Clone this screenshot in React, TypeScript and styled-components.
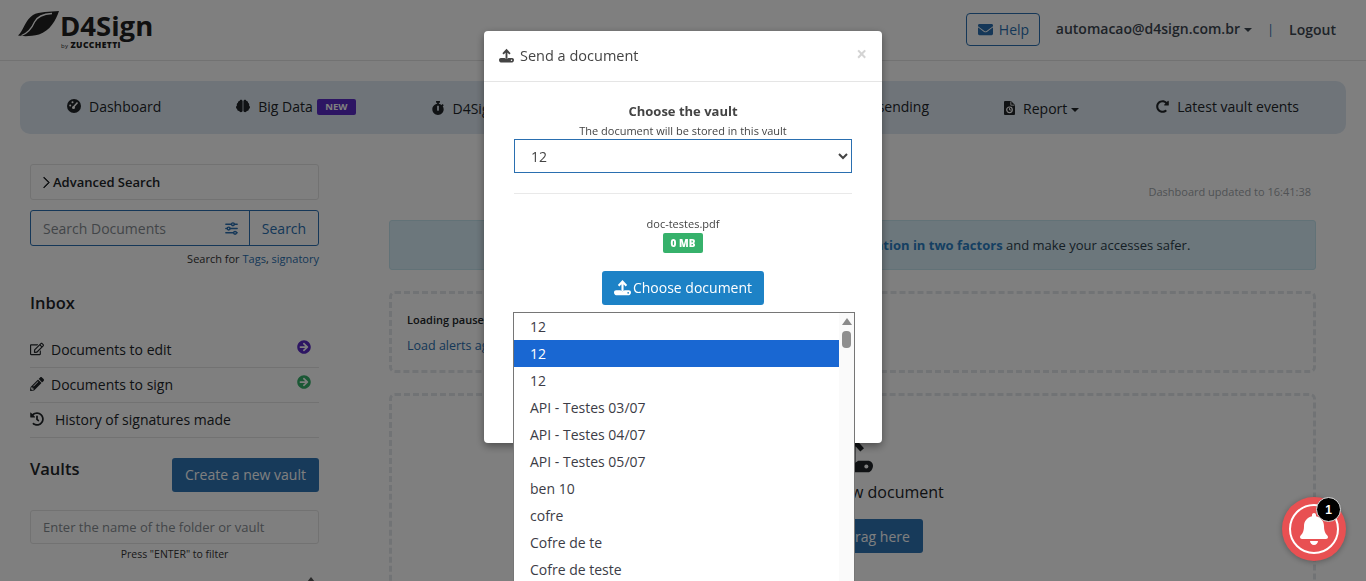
import React from "react";
import styled, { createGlobalStyle } from "styled-components";
import {
  FaEnvelope,
  FaStopwatch,
  FaRedoAlt,
  FaRegEdit,
  FaPencilAlt,
  FaHistory,
  FaArrowCircleRight,
  FaBell,
  FaBrain,
} from "react-icons/fa";
import { BsChevronRight } from "react-icons/bs";
import { TbAdjustmentsHorizontal } from "react-icons/tb";

const GlobalStyle = createGlobalStyle`
  html, body {
    margin: 0;
    height: 100%;
    overflow: hidden;
    background: #fff;
    font-family: "Open Sans", "Liberation Sans", sans-serif;
    color: #212529;
  }
  * { box-sizing: border-box; }
`;

const Page = styled.div`
  width: 1366px;
  height: 581px;
  overflow: hidden;
`;

const Header = styled.header`
  display: flex;
  align-items: center;
  height: 61px;
  padding: 0 30px 2px 18px;
  border-bottom: 1px solid #e4e4e4;
`;

const Logo = styled.div`
  display: flex;
  align-items: flex-start;
  height: 38px;
  margin-top: 2px;
  color: #212121;
`;

const LogoWords = styled.div`
  display: flex;
  flex-direction: column;
  margin-left: 1px;
`;

const LogoName = styled.span`
  font-size: 27.5px;
  font-weight: 700;
  line-height: 29px;
`;

const LogoBy = styled.span`
  font-size: 8.5px;
  font-weight: 800;
  line-height: 9px;
  padding-left: 1px;
  letter-spacing: 0.4px;
  small { font-size: 6px; font-weight: 400; margin-right: 2px; }
`;

const HeaderRight = styled.div`
  display: flex;
  align-items: center;
  margin-left: auto;
  font-size: 14px;
`;

const HelpButton = styled.button`
  display: flex;
  align-items: center;
  gap: 6px;
  height: 33px;
  width: 74px;
  padding: 0 0 0 11px;
  margin-right: 16px;
  background: transparent;
  border: 1px solid #2a6fb0;
  border-radius: 4px;
  color: #2a6fb0;
  font: inherit;
  svg { font-size: 15px; }
`;

const UserMenu = styled.span`
  font-weight: 600;
  color: #3c4650;
  margin-top: -2px;
`;

const Caret = styled.span`
  display: inline-block;
  width: 0;
  height: 0;
  margin-left: 4px;
  vertical-align: 2px;
  border-left: 4px solid transparent;
  border-right: 4px solid transparent;
  border-top: 4px solid currentColor;
`;

const Divider = styled.span`
  margin: 0 15px 0 15px;
  color: #2a6fb0;
  font-size: 13px;
`;

const LogoutLink = styled.span`
  font-weight: 600;
  color: #3c4650;
`;

const Nav = styled.nav`
  display: flex;
  align-items: center;
  gap: 75px;
  height: 53px;
  margin: 20px 20px 0;
  padding: 0 47px 3px;
  background: #dfe9f3;
  border-radius: 10px;
  font-size: 14px;
  color: #212529;
`;

const NavItem = styled.div<{ $low?: boolean; $push?: boolean }>`
  display: flex;
  align-items: center;
  gap: 8px;
  white-space: nowrap;
  margin-top: ${(p) => (p.$low ? "4px" : "0")};
  margin-left: ${(p) => (p.$push ? "auto" : "0")};
  svg { flex-shrink: 0; }
`;

const ReportItem = styled(NavItem)`
  margin-right: 2px;
`;

const NewTag = styled.span`
  display: inline-block;
  background: #5b2bc7;
  color: #fff;
  font-size: 9.5px;
  font-weight: 700;
  line-height: 16px;
  padding: 0 8px 0 8.500px;
  border-radius: 2px;
  margin-left: -4px;
  margin-top: 2px;
`;

const Content = styled.div`
  display: grid;
  grid-template-columns: 289px 927px;
  column-gap: 70px;
  padding: 30px 30px 0;
`;

const Sidebar = styled.aside`
  display: flex;
  flex-direction: column;
`;

const AdvancedBox = styled.div`
  display: flex;
  align-items: center;
  height: 36px;
  padding-left: 9px;
  border: 1px solid #e4e4e4;
  border-radius: 3px;
  font-size: 13px;
  font-weight: 600;
  svg { font-size: 13px; stroke: currentColor; stroke-width: 1px; }
`;

const SearchGroup = styled.div`
  display: flex;
  height: 36px;
  margin-top: 10px;
  border: 1px solid #2a6fb0;
  border-radius: 3px;
  font-size: 14px;
`;

const SearchInput = styled.div`
  display: flex;
  align-items: center;
  flex: 1;
  padding: 0 9px 0 12px;
  color: #858b91;
  svg { margin-left: auto; color: #2a6fb0; font-size: 17px; }
`;

const SearchButton = styled.div`
  display: flex;
  align-items: center;
  justify-content: center;
  width: 69px;
  border-left: 1px solid #2a6fb0;
  color: #2a6fb0;
`;

const SearchHint = styled.div`
  margin-top: 5px;
  text-align: right;
  font-size: 11px;
  line-height: 15px;
  color: #333;
  a { color: #2a6fb0; }
`;

const SectionTitle = styled.h3`
  margin: 0;
  font-size: 16.5px;
  font-weight: 600;
  line-height: 22px;
`;

const InboxTitle = styled(SectionTitle)`
  margin-top: 26px;
  margin-bottom: 19px;
`;

const InboxRow = styled.div<{ $wide?: boolean }>`
  display: flex;
  align-items: center;
  height: 35px;
  padding-bottom: 2px;
  border-bottom: 1px solid #e4e4e4;
  font-size: 14px;
  > svg:first-child { font-size: 14px; margin-right: ${(p) => (p.$wide ? "11px" : "7px")}; }
`;

const RowArrow = styled(FaArrowCircleRight)<{ $tone: string }>`
  margin-left: auto;
  margin-right: 8px;
  margin-top: -4px;
  font-size: 14px;
  color: ${(p) => p.$tone};
`;

const VaultHeader = styled.div`
  display: flex;
  align-items: flex-start;
  justify-content: space-between;
  margin-top: 20px;
`;

const VaultTitle = styled(SectionTitle)`
  margin-top: 0;
`;

const CreateButton = styled.div`
  display: flex;
  align-items: center;
  justify-content: center;
  width: 147px;
  height: 34px;
  padding-bottom: 1px;
  background: #2e74b5;
  color: #fff;
  font-size: 14px;
  border-radius: 3px;
`;

const FilterInput = styled.div`
  display: flex;
  align-items: center;
  height: 34px;
  margin-top: 18px;
  padding-left: 12px;
  border: 1px solid #e4e4e4;
  border-radius: 3px;
  font-size: 13px;
  color: #858b91;
`;

const FilterHint = styled.div`
  margin-top: 3px;
  text-align: center;
  font-size: 10.5px;
  line-height: 14px;
  color: #333;
`;

const Main = styled.main`
  display: flex;
  flex-direction: column;
`;

const UpdatedAt = styled.div`
  margin-top: 20px;
  padding-right: 5px;
  text-align: right;
  font-size: 11px;
  line-height: 16px;
  color: #a0a5aa;
`;

const TwoFactorAlert = styled.div`
  display: flex;
  align-items: center;
  justify-content: center;
  height: 50px;
  margin-top: 20px;
  background: #d9eef8;
  border: 1px solid #c4e4ee;
  border-radius: 3px;
  font-size: 13px;
  color: #2b3e4c;
  b { color: #2a7fc4; font-weight: 700; }
`;

const DashedBox = styled.section`
  border: 3px dashed #e3e6ea;
  border-radius: 6px;
`;

const AlertsBox = styled(DashedBox)`
  height: 82px;
  margin-top: 21px;
  padding: 18px 15px;
  font-size: 11px;
`;

const LoadingLabel = styled.div`
  font-weight: 600;
  line-height: 16px;
`;

const LoadLink = styled.div`
  margin-top: 9px;
  font-size: 12.5px;
  color: #2a6fb0;
`;

const DropBox = styled(DashedBox)`
  display: flex;
  flex-direction: column;
  align-items: center;
  height: 260px;
  margin-top: 20px;
  padding-top: 38px;
  font-size: 16px;
`;

const DropTitle = styled.div`
  margin-top: 6px;
  line-height: 24px;
`;

const DropButton = styled.div`
  display: flex;
  align-items: center;
  justify-content: center;
  width: 141px;
  height: 34px;
  margin-top: 15px;
  background: #2e74b5;
  color: #fff;
  font-size: 14px;
  border-radius: 3px;
`;

const ScrollMark = styled.div`
  align-self: flex-end;
  width: 0;
  height: 0;
  margin-top: 16px;
  margin-right: 4px;
  border-left: 4px solid transparent;
  border-right: 4px solid transparent;
  border-bottom: 5px solid #555;
`;

const Backdrop = styled.div`
  position: fixed;
  inset: 0;
  display: flex;
  justify-content: center;
  align-items: flex-start;
  background: rgba(0, 0, 0, 0.5);
`;

const Modal = styled.div`
  position: relative;
  width: 398px;
  height: 412px;
  margin-top: 31px;
  background: #fff;
  border-radius: 4px;
  box-shadow: 0 3px 9px rgba(0, 0, 0, 0.4);
  color: #444;
`;

const ModalHeader = styled.div`
  display: flex;
  align-items: center;
  gap: 6px;
  height: 51px;
  padding: 0 15px 2px;
  border-bottom: 1px solid #e5e5e5;
  font-size: 14.5px;
  font-weight: 500;
`;

const CloseMark = styled.span`
  margin-left: auto;
  margin-top: -3px;
  font-size: 19px;
  font-weight: 700;
  color: #d4d4d4;
`;

const ModalBody = styled.div`
  display: flex;
  flex-direction: column;
  align-items: center;
  padding: 20px 30px 0;
`;

const VaultLabel = styled.div`
  font-size: 13px;
  font-weight: 700;
  line-height: 18px;
`;

const VaultNote = styled.div`
  font-size: 11px;
  line-height: 16px;
  margin-top: 3px;
`;

const VaultSelect = styled.select`
  width: 338px;
  height: 34px;
  padding: 0 12px;
  background: #fff;
  border: 1px solid #2a6fb0;
  border-radius: 0;
  font: inherit;
  font-size: 14px;
  color: #444;
  outline: none;
`;

const Rule = styled.hr`
  width: 338px;
  margin: 20px 0 0;
  border: 0;
  border-top: 1px solid #e9e9e9;
`;

const FileName = styled.div`
  margin-top: 22px;
  font-size: 11px;
  line-height: 16px;
`;

const SizeBadge = styled.span`
  display: flex;
  align-items: center;
  justify-content: center;
  width: 40px;
  height: 20px;
  margin-top: 1px;
  background: #36b16b;
  color: #fff;
  font-size: 10px;
  font-weight: 800;
  border-radius: 2px;
`;

const ChooseButton = styled.div`
  display: flex;
  align-items: center;
  justify-content: center;
  gap: 2px;
  width: 162px;
  height: 34px;
  margin-top: 18px;
  padding-bottom: 2px;
  background: #1d82c6;
  color: #fff;
  font-size: 14px;
  border-radius: 3px;
`;

const OptionList = styled.div`
  position: absolute;
  top: 281px;
  left: 29px;
  display: flex;
  width: 342px;
  height: 300px;
  background: #fff;
  border: 1px solid #767676;
  color: #3c3c46;
  font-size: 14px;
`;

const Options = styled.div`
  flex: 1;
`;

const OptionRow = styled.div<{ $active?: boolean }>`
  display: flex;
  align-items: center;
  height: 27px;
  padding-left: 16px;
  background: ${(p) => (p.$active ? "#1967d2" : "transparent")};
  color: ${(p) => (p.$active ? "#fff" : "inherit")};
`;

const ScrollTrack = styled.div`
  display: flex;
  flex-direction: column;
  align-items: center;
  width: 15px;
  padding-top: 5px;
  background: #fafafa;
`;

const ScrollUp = styled.span`
  width: 0;
  height: 0;
  border-left: 5px solid transparent;
  border-right: 5px solid transparent;
  border-bottom: 7px solid #8a8a8a;
`;

const ScrollThumb = styled.span`
  width: 9px;
  height: 17px;
  margin-top: 6px;
  background: #8f8f8f;
  border-radius: 4px;
`;

const NotifyButton = styled.div`
  position: fixed;
  left: 1282px;
  top: 497px;
  display: flex;
  align-items: center;
  justify-content: center;
  width: 64px;
  height: 64px;
  background: #e85052;
  border-radius: 50%;
  box-shadow: 0 1px 6px rgba(0, 0, 0, 0.3);
`;

const NotifyRing = styled.div`
  display: flex;
  align-items: center;
  justify-content: center;
  width: 50px;
  height: 50px;
  border: 2px solid #fff;
  border-radius: 50%;
  color: #fff;
  font-size: 32px;
`;

const NotifyCount = styled.span`
  position: absolute;
  top: 0;
  right: 5px;
  display: flex;
  align-items: center;
  justify-content: center;
  width: 25px;
  height: 25px;
  background: #000;
  border: 1px solid #ddd;
  border-radius: 50%;
  color: #fff;
  font-family: "Liberation Sans", sans-serif;
  font-size: 12px;
  font-weight: 700;
`;

const UploadIcon = ({ size = 16, hole = "#fff" }: { size?: number; hole?: string }) => (
  <svg width={size} height={size} viewBox="0 0 24 24" fill="none">
    <path d="M12 17V4M6.500 9.500 12 3.500l5.500 6" stroke="currentColor" strokeWidth="3" />
    <path
      d="M3 16h6c1 1.500 5 1.500 6 0h6c1.700 0 3 1.300 3 3s-1.300 4-3 4H3c-1.700 0-3-2.300-3-4s1.300-3 3-3z"
      fill="currentColor"
    />
    <circle cx="20" cy="19.500" r="1.200" fill={hole} />
  </svg>
);

const LeafLogo = () => (
  <svg width="41" height="26" viewBox="0 0 41 26">
    <path
      d="M0 24.500C5 21 7 9 15 4 21 .5 32 1 41 0 38 9 32 20 21 23.500 13 25.500 5 25.500 0 24.500z"
      fill="currentColor"
    />
    <path d="M34 2.500C25 3 19 6 16.500 11 14 17 10 22 3.500 24.500" fill="none" stroke="#fff" strokeWidth="1.300" />
  </svg>
);

const GaugeIcon = () => (
  <svg width="14" height="14" viewBox="0 0 14 14">
    <circle cx="7" cy="7" r="7" fill="#212529" />
    <path d="M6.500 8 10.500 3.500" stroke="#fff" strokeWidth="1.500" />
    <circle cx="3.200" cy="6.500" r="1" fill="#fff" />
    <circle cx="5.500" cy="3.200" r="1" fill="#fff" />
    <circle cx="6.500" cy="8.500" r="1.500" fill="#fff" />
  </svg>
);

const ReportIcon = () => (
  <svg width="11" height="14" viewBox="0 0 11 14">
    <path d="M1 0h6l4 4v9a1 1 0 0 1-1 1H1a1 1 0 0 1-1-1V1a1 1 0 0 1 1-1z" fill="#212529" />
    <circle cx="5.500" cy="8.800" r="2.800" fill="none" stroke="#fff" strokeWidth="1.200" />
    <path d="M5.500 7v2h1.800" fill="none" stroke="#fff" strokeWidth="0.900" />
    <path d="M6.800 .5V4.200h3.700" fill="none" stroke="#fff" strokeWidth="0.800" />
  </svg>
);

const vaults = [
  "12",
  "12",
  "12",
  "API - Testes 03/07",
  "API - Testes 04/07",
  "API - Testes 05/07",
  "ben 10",
  "cofre",
  "Cofre de te",
  "Cofre de teste",
];

const App = (): JSX.Element => {
  return (
    <Page>
      <GlobalStyle />
      <Header>
        <Logo>
          <LeafLogo />
          <LogoWords>
            <LogoName>D4Sign</LogoName>
            <LogoBy>
              <small>by</small>ZUCCHETTI
            </LogoBy>
          </LogoWords>
        </Logo>
        <HeaderRight>
          <HelpButton>
            <FaEnvelope /> Help
          </HelpButton>
          <UserMenu>
            automacao@d4sign.com.br
            <Caret />
          </UserMenu>
          <Divider>|</Divider>
          <LogoutLink>Logout</LogoutLink>
        </HeaderRight>
      </Header>

      <Nav>
        <NavItem>
          <GaugeIcon />
          Dashboard
        </NavItem>
        <NavItem>
          <FaBrain size={14} />
          Big Data <NewTag>NEW</NewTag>
        </NavItem>
        <NavItem $low>
          <FaStopwatch size={14} />
          D4Sign Now
        </NavItem>
        <NavItem $push>Pending sending</NavItem>
        <ReportItem $low>
          <ReportIcon />
          <span>
            Report
            <Caret />
          </span>
        </ReportItem>
        <NavItem>
          <FaRedoAlt size={13} />
          Latest vault events
        </NavItem>
      </Nav>

      <Content>
        <Sidebar>
          <AdvancedBox>
            <BsChevronRight />
            Advanced Search
          </AdvancedBox>
          <SearchGroup>
            <SearchInput>
              Search Documents
              <TbAdjustmentsHorizontal />
            </SearchInput>
            <SearchButton>Search</SearchButton>
          </SearchGroup>
          <SearchHint>
            Search for <a>Tags</a>, <a>signatory</a>
          </SearchHint>

          <InboxTitle>Inbox</InboxTitle>
          <InboxRow>
            <FaRegEdit />
            Documents to edit
            <RowArrow $tone="#5b2bc7" />
          </InboxRow>
          <InboxRow>
            <FaPencilAlt />
            Documents to sign
            <RowArrow $tone="#36b16b" />
          </InboxRow>
          <InboxRow $wide>
            <FaHistory />
            History of signatures made
          </InboxRow>

          <VaultHeader>
            <VaultTitle>Vaults</VaultTitle>
            <CreateButton>Create a new vault</CreateButton>
          </VaultHeader>
          <FilterInput>Enter the name of the folder or vault</FilterInput>
          <FilterHint>Press "ENTER" to filter</FilterHint>
          <ScrollMark />
        </Sidebar>

        <Main>
          <UpdatedAt>Dashboard updated to 16:41:38</UpdatedAt>
          <TwoFactorAlert>
            <span>
              Increase the security of your account, enable the <b>authentication in two factors</b> and make your
              accesses safer.
            </span>
          </TwoFactorAlert>
          <AlertsBox>
            <LoadingLabel>Loading paused</LoadingLabel>
            <LoadLink>Load alerts again</LoadLink>
          </AlertsBox>
          <DropBox>
            <UploadIcon size={40} />
            <DropTitle>Upload a new document</DropTitle>
            <DropButton>Click or drag here</DropButton>
          </DropBox>
        </Main>
      </Content>

      <Backdrop>
        <Modal>
          <ModalHeader>
            <UploadIcon size={15} />
            Send a document
            <CloseMark>×</CloseMark>
          </ModalHeader>
          <ModalBody>
            <VaultLabel>Choose the vault</VaultLabel>
            <VaultNote>The document will be stored in this vault</VaultNote>
            <VaultSelect defaultValue="12">
              <option value="12">12</option>
            </VaultSelect>
            <Rule />
            <FileName>doc-testes.pdf</FileName>
            <SizeBadge>0 MB</SizeBadge>
            <ChooseButton>
              <UploadIcon size={17} hole="#1d82c6" />
              Choose document
            </ChooseButton>
          </ModalBody>
          <OptionList>
            <Options>
              {vaults.map((name, i) => (
                <OptionRow key={i} $active={i === 1}>
                  {name}
                </OptionRow>
              ))}
            </Options>
            <ScrollTrack>
              <ScrollUp />
              <ScrollThumb />
            </ScrollTrack>
          </OptionList>
        </Modal>
        <NotifyButton>
          <NotifyRing>
            <FaBell />
          </NotifyRing>
          <NotifyCount>1</NotifyCount>
        </NotifyButton>
      </Backdrop>
    </Page>
  );
};

export default App;
